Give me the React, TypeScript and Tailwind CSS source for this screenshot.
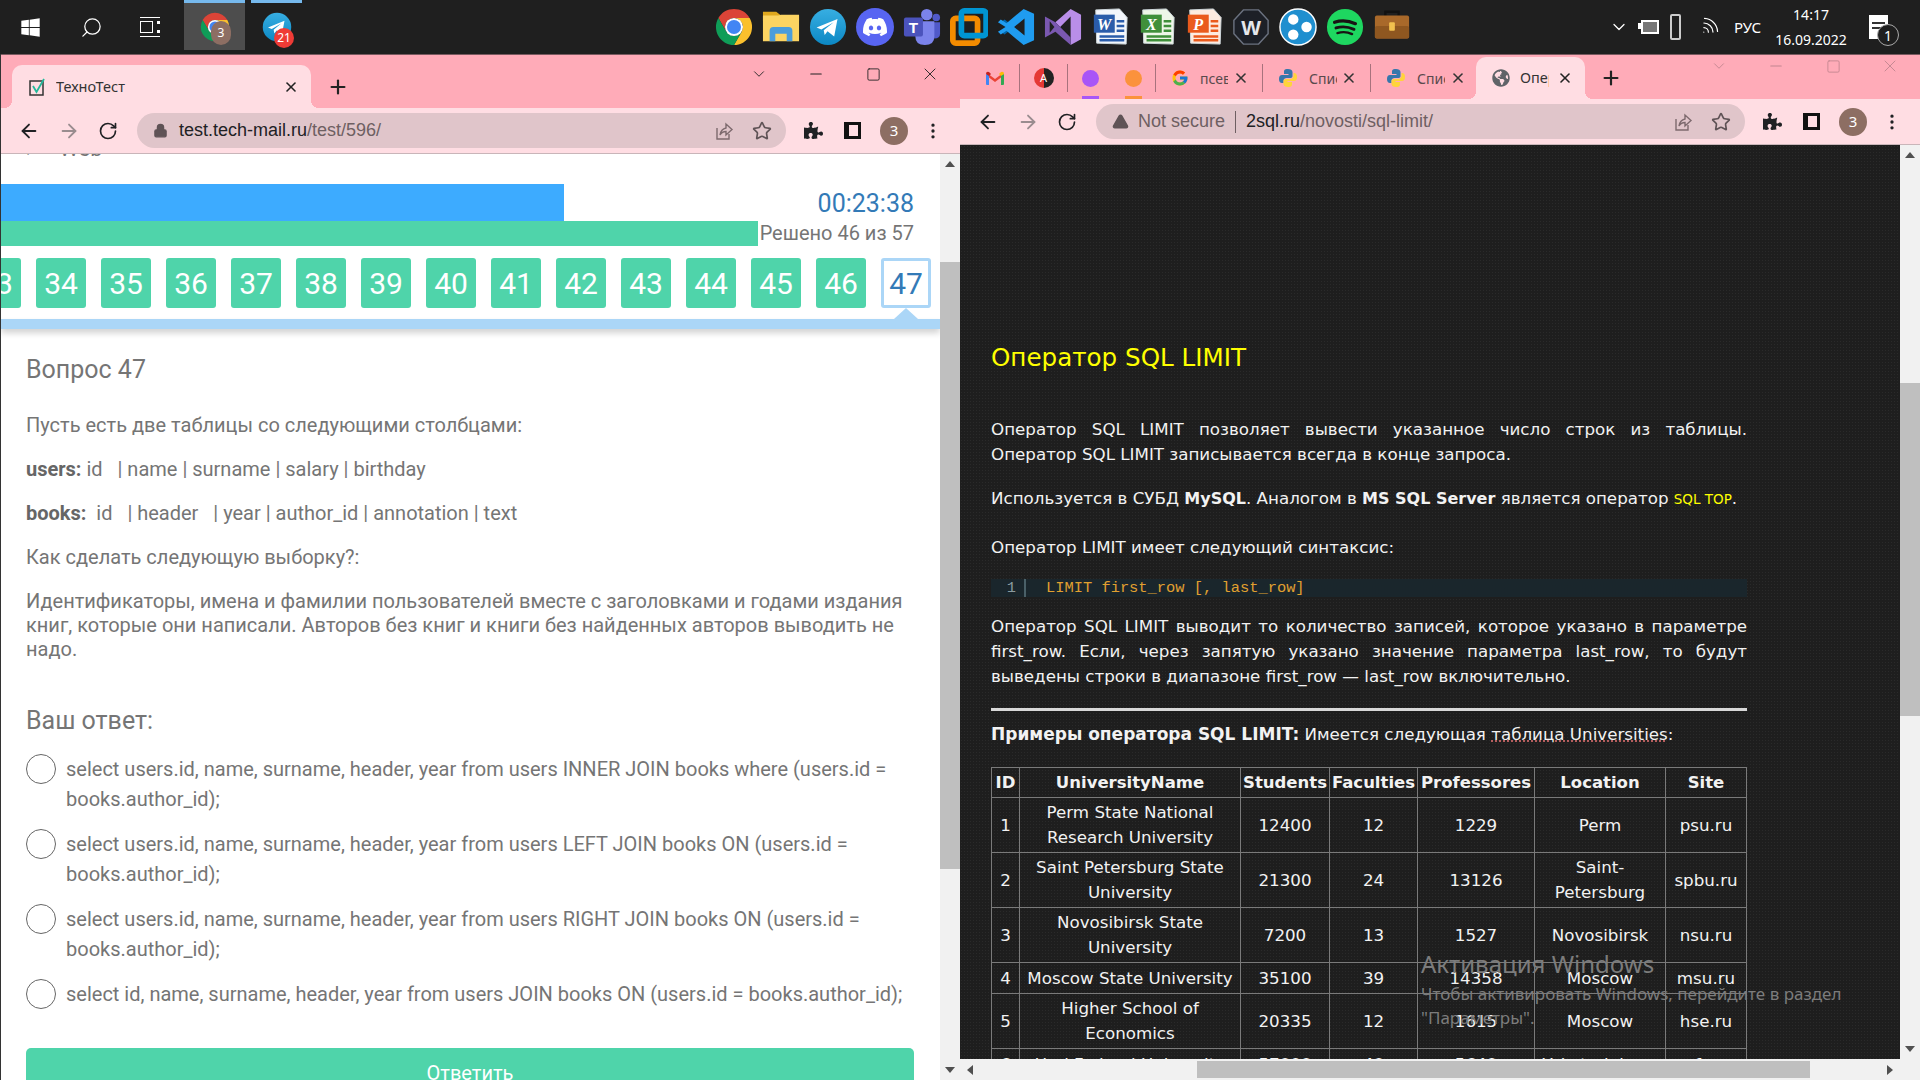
import { ArrowLeft, ArrowRight, ChevronDown, Lock, Minus, Plus, RotateCw, Search, Square, Star, TriangleAlert, Wifi, X, EllipsisVertical } from 'lucide-react'
import { ReactNode } from 'react'
import { FaPuzzlePiece, FaWindows, FaGlobeAmericas } from 'react-icons/fa'
import { FcGoogle } from 'react-icons/fc'
import { SiDiscord } from 'react-icons/si'

const ChromeIcon = ({ size = 38 }: { size?: number }) => (
  <svg width={size} height={size} viewBox="0 0 40 40">
    <path fill="#db4437" d="M3.55 10.5A19 19 0 0 1 36.45 10.5H20A9.5 9.5 0 0 0 11.8 24.75Z" />
    <path fill="#fbc02d" d="M36.45 10.5A19 19 0 0 1 20 39L28.2 24.75A9.5 9.5 0 0 0 20 10.5Z" />
    <path fill="#0f9d58" d="M20 39A19 19 0 0 1 3.55 10.5L11.8 24.75A9.5 9.5 0 0 0 28.2 24.75Z" />
    <circle cx="20" cy="20" r="9.5" fill="#fff" />
    <circle cx="20" cy="20" r="7.4" fill="#4285f4" />
  </svg>
)

const TelegramIcon = ({ size = 38 }: { size?: number }) => (
  <svg width={size} height={size} viewBox="0 0 40 40">
    <defs>
      <linearGradient id="tg" x1="0" y1="0" x2="0" y2="1">
        <stop offset="0" stopColor="#37aee2" />
        <stop offset="1" stopColor="#0c88c4" />
      </linearGradient>
    </defs>
    <circle cx="20" cy="20" r="19" fill="url(#tg)" />
    <path fill="#fff" d="M8 20.5 30 11.5 26.5 30 19.5 24.5 16.5 28.5 15.5 23.5 26 15 13 22.5Z" />
  </svg>
)

const FolderIcon = () => (
  <svg width="38" height="38" viewBox="0 0 40 40">
    <path fill="#e0a81e" d="M1 4h14l5 4h19v6H1Z" />
    <path fill="#fcd462" d="M1 8h16l3-1h19v28H1Z" />
    <path fill="#4b9ddb" d="M8 35V24q0-4 4-4h16q4 0 4 4v11h-6v-8H14v8Z" />
  </svg>
)

const DiscordIcon = () => (
  <div className="w-[38px] h-[38px] rounded-full bg-[#5865f2] flex items-center justify-center">
    <SiDiscord className="text-white" size={24} />
  </div>
)

const TeamsIcon = () => (
  <svg width="38" height="38" viewBox="0 0 40 40">
    <circle cx="25" cy="7" r="6" fill="#7b83eb" />
    <circle cx="35" cy="10" r="4" fill="#5059c9" />
    <path fill="#5059c9" d="M30 15h9v12q0 5-6 5h-3Z" />
    <path fill="#7b83eb" d="M13 14h20v16q0 9-10 9T13 30Z" />
    <rect x="1" y="10" width="20" height="20" rx="2" fill="#4b53bc" />
    <text x="11" y="26" textAnchor="middle" fontSize="16" fontWeight="700" fill="#fff" fontFamily="Liberation Sans, sans-serif">T</text>
  </svg>
)

const VmwareIcon = () => (
  <svg width="38" height="38" viewBox="0 0 40 40">
    <rect x="3" y="11" width="26" height="26" rx="3" fill="none" stroke="#f38b00" strokeWidth="6" />
    <rect x="12" y="3" width="26" height="26" rx="3" fill="none" stroke="#0095d3" strokeWidth="6" />
  </svg>
)

const VsCodeIcon = () => (
  <svg width="38" height="38" viewBox="0 0 40 40">
    <path fill="#0065a9" d="M4 15 8 12 18 20 8 28 4 25 10 20Z" />
    <path fill="#1f9cf0" d="M28 1 39 6V34L28 39 10 24 4 28 1 25 9 20 1 15 4 12 10 16ZM29 11 18 20 29 29Z" />
  </svg>
)

const VisualStudioIcon = () => (
  <svg width="38" height="38" viewBox="0 0 40 40">
    <path fill="#b98ee8" d="M28 1 39 7V33L28 39V9L17 20 12 15Z" />
    <path fill="#7a58b0" d="M28 39 12 25 1 31V9L12 15 28 31ZM6 14V26L11 20Z" />
  </svg>
)

const OfficeIcon = ({ letter, color, light }: { letter: string; color: string; light: string }) => (
  <svg width="38" height="38" viewBox="0 0 40 40">
    <path fill={light} d="M5 2 30 1 38 10 37 38 6 37Z" stroke="#cfd8dc" />
    <rect x="3" y="7" width="22" height="19" fill={color} />
    <text x="14" y="23" textAnchor="middle" fontSize="17" fontWeight="700" fontStyle="italic" fill="#fff" fontFamily="Liberation Serif, serif">{letter}</text>
    <path stroke={color} strokeWidth="2.5" d="M27 14h8M27 19h8M27 24h8M9 30h26M9 34h26" />
  </svg>
)

const WindscribeIcon = () => (
  <svg width="38" height="38" viewBox="0 0 40 40">
    <path fill="#1d2027" stroke="#6b7280" strokeWidth="1.5" d="M12 2H28L38 13V27L28 38H12L2 27V13Z" />
    <text x="20" y="28" textAnchor="middle" fontSize="22" fontWeight="700" fill="#e5e7eb" fontFamily="Liberation Sans, sans-serif">W</text>
  </svg>
)

const DotsIcon = () => (
  <svg width="38" height="38" viewBox="0 0 40 40">
    <circle cx="20" cy="20" r="19" fill="#1f8fcf" stroke="#fff" strokeWidth="1.5" />
    <circle cx="15" cy="12" r="5.5" fill="#fff" />
    <circle cx="29" cy="20" r="5.5" fill="#fff" />
    <circle cx="15" cy="28" r="5.5" fill="#fff" />
  </svg>
)

const SpotifyIcon = () => (
  <svg width="38" height="38" viewBox="0 0 40 40">
    <circle cx="20" cy="20" r="19" fill="#1ed760" />
    <g fill="none" stroke="#191414" strokeLinecap="round">
      <path strokeWidth="3.4" d="M9 15q11-3.5 22 1.5" />
      <path strokeWidth="3" d="M10.5 21q9.5-3 19 1.5" />
      <path strokeWidth="2.4" d="M12 26.5q8-2.5 15.5 1" />
    </g>
  </svg>
)

const BriefcaseIcon = () => (
  <svg width="38" height="38" viewBox="0 0 40 40">
    <path fill="none" stroke="#111" strokeWidth="2.5" d="M13 9V4h14v5" />
    <rect x="2" y="8" width="36" height="24" rx="2" fill="#a9692a" />
    <rect x="2" y="19" width="36" height="13" rx="2" fill="#8f5720" />
    <rect x="17" y="15" width="6" height="9" rx="1" fill="#f2c14e" />
  </svg>
)

const TabCheckIcon = () => (
  <svg width="18" height="18" viewBox="0 0 18 18" className="shrink-0">
    <rect x="2" y="3" width="13" height="14" fill="none" stroke="#333" strokeWidth="1.5" />
    <path d="M5 8 8.5 14 16 1" fill="none" stroke="#22b89a" strokeWidth="1.8" />
  </svg>
)

const GmailIcon = () => (
  <svg width="20" height="20" viewBox="0 0 20 20">
    <path fill="#ea4335" d="M2 5 10 11 18 5V8L10 14 2 8Z" />
    <path fill="#4285f4" d="M1 6 4 7V17H2Q1 17 1 16Z" />
    <path fill="#34a853" d="M19 6 16 7V17H18Q19 17 19 16Z" />
    <path fill="#c5221f" d="M1 6Q1 3 4 4L6 6 4 8Z" />
    <path fill="#fbbc04" d="M19 6Q19 3 16 4L14 6 16 8Z" />
  </svg>
)

const PythonIcon = () => (
  <svg width="20" height="20" viewBox="0 0 20 20" className="shrink-0">
    <path fill="#3776ab" d="M10 1C6 1 6 2.5 6 4V6H10.5V7H4C2 7 1 8.5 1 11S2 15 4 15H5.5V12.5C5.5 11 7 10 8.5 10H12.5C14 10 14.5 9 14.5 8V4C14.5 2 12.5 1 10 1Z" />
    <path fill="#ffd43b" d="M10 19C14 19 14 17.5 14 16V14H9.5V13H16C18 13 19 11.5 19 9S18 5 16 5H15.5V8C15.5 9.5 14 11 12.5 11H8C6.5 11 5.5 12 5.5 13V16C5.5 18 7.5 19 10 19Z" />
  </svg>
)

const ShareIcon = () => (
  <svg width="20" height="20" viewBox="0 0 20 20" fill="none" stroke="#7d6a6e" strokeWidth="1.4">
    <path d="M3 7V18H15V13" />
    <path d="M6 14Q7 8 12 7V3L18 8.5 12 14V10.5Q8 10.5 6 14Z" />
  </svg>
)

const AvatarBadge = () => (
  <div className="ml-[19px] w-[28px] h-[28px] rounded-full bg-[#8d6e63] text-white text-[15px] flex items-center justify-center">3</div>
)

type ToolbarProps = {
  site: ReactNode
  height: string
}

const Toolbar = ({ site, height }: ToolbarProps) => (
  <div className={`${height} bg-[#ffdde3] flex items-center shrink-0 border-b border-[#c9b5b9] text-[#202124]`}>
    <div className="w-[136px] flex items-center pl-[17px] gap-[18px]">
      <ArrowLeft size={22} />
      <ArrowRight size={22} className="text-[#9a8c8f]" />
      <RotateCw size={20} />
    </div>
    <div className="w-[649px] h-[35px] rounded-full bg-[#e0c5ca] flex items-center pl-[16px] pr-[14px] text-[18px]">
      {site}
      <div className="ml-auto flex items-center gap-[18px]">
        <ShareIcon />
        <Star size={20} className="text-[#5f5356]" />
      </div>
    </div>
    <div className="flex items-center pl-[18px]">
      <FaPuzzlePiece size={19} />
      <div className="ml-[21px] w-[17px] h-[17px] border-[3px] border-l-[5px] border-[#111] bg-[#ffdde3]" />
      <AvatarBadge />
      <EllipsisVertical size={20} className="ml-[15px]" />
    </div>
  </div>
)

const WindowControls = ({ faded }: { faded?: boolean }) => (
  <div className={`ml-auto flex items-center ${faded ? 'h-[22px] text-[#c2868f]' : 'h-[38px] text-[#222]'}`}>
    <ChevronDown size={18} strokeWidth={1.2} />
    <Minus size={18} strokeWidth={1.4} className="ml-[39px]" />
    <Square size={15} strokeWidth={1.4} className="ml-[41px]" />
    <X size={20} strokeWidth={1.1} className="ml-[39px] mr-[20px]" />
  </div>
)

const ActiveTab = ({ icon, title, w }: { icon: ReactNode; title: string; w: string }) => (
  <div className={`relative ${w} h-full rounded-t-[10px] bg-[#ffdde3] flex items-center pl-[16px] pr-[12px] text-[14.5px] text-[#333] shrink-0`}>
    <span className="absolute -left-[8px] bottom-0 w-[8px] h-[8px] bg-[radial-gradient(circle_at_0_0,#ffabb8_8px,#ffdde3_8px)]" />
    <span className="absolute -right-[8px] bottom-0 w-[8px] h-[8px] bg-[radial-gradient(circle_at_100%_0,#ffabb8_8px,#ffdde3_8px)]" />
    {icon}
    <span className="ml-[10px] overflow-hidden whitespace-nowrap flex-1">{title}</span>
    <X size={16} strokeWidth={2.4} className="ml-[8px] shrink-0 text-[#222]" />
  </div>
)

const SmallTab = ({ icon, title }: { icon: ReactNode; title: string }) => (
  <div className="w-[108px] h-[28px] flex items-center pl-[15px] pr-[13px] border-r border-[#a8727d] text-[14px] text-[#5a4a4d] shrink-0">
    {icon}
    <span className="ml-[11px] overflow-hidden whitespace-nowrap w-[28px]">{title}</span>
    <X size={16} strokeWidth={2.4} className="ml-auto text-[#333] shrink-0" />
  </div>
)

const Scrollbar = ({ before, thumb }: { before: string; thumb: string }) => (
  <div className="w-[20px] shrink-0 bg-[#f1f1f1] flex flex-col items-center relative">
    <div className={`${before} w-full flex justify-center pt-[7px]`}>
      <div className="w-0 h-0 border-x-[5px] border-x-transparent border-b-[6px] border-b-[#505050]" />
    </div>
    <div className={`${thumb} w-full bg-[#bfbfbf]`} />
    <div className="flex-1 w-full flex justify-center items-end pb-[7px]">
      <div className="w-0 h-0 border-x-[5px] border-x-transparent border-t-[6px] border-t-[#505050]" />
    </div>
  </div>
)

const Taskbar = () => (
  <div className="h-[54px] bg-[#1f1f1f] flex items-center shrink-0 text-white">
    <div className="w-[20px]" />
    <FaWindows size={21} />
    <Search size={23} strokeWidth={1.3} className="ml-[39px] -scale-x-100" />
    <div className="ml-[37px] w-[20px] h-[20px] border-y border-white relative">
      <div className="absolute right-0 top-[3px] w-[3px] h-[12px] border-y-[3px] border-white" />
      <div className="absolute left-0 top-[3px] w-[13px] h-[12px] border border-white" />
    </div>
    <div className="ml-[24px] w-[61px] h-[50px] self-start bg-[#4d4d4d] border-t-[3px] border-[#76b9ed] flex items-center justify-center relative">
      <ChromeIcon size={30} />
      <span className="absolute left-[27px] top-[18px] w-[20px] h-[24px] rounded-full bg-[#8d6e63] text-[12px] flex items-center justify-center">3</span>
    </div>
    <div className="ml-[6px] w-[51px] h-[50px] self-start border-t-[3px] border-[#76b9ed] flex items-center justify-center relative">
      <TelegramIcon size={30} />
      <span className="absolute left-[23px] top-[25px] w-[20px] h-[20px] rounded-full bg-[#ef3b36] text-[12px] flex items-center justify-center">21</span>
    </div>
    <div className="ml-[413px] flex items-center gap-[9px]">
      <ChromeIcon />
      <FolderIcon />
      <TelegramIcon />
      <DiscordIcon />
      <TeamsIcon />
      <VmwareIcon />
      <VsCodeIcon />
      <VisualStudioIcon />
      <OfficeIcon letter="W" color="#2a5caa" light="#f3f6fb" />
      <OfficeIcon letter="X" color="#3f8f3a" light="#eef6e8" />
      <OfficeIcon letter="P" color="#ea5a1c" light="#fdebe0" />
      <WindscribeIcon />
      <DotsIcon />
      <SpotifyIcon />
      <BriefcaseIcon />
    </div>
    <ChevronDown size={20} strokeWidth={1.5} className="ml-[198px]" />
    <div className="ml-[12px] w-[18px] h-[14px] border-2 border-white bg-[#777] relative">
      <div className="absolute -left-[5px] top-[1px] w-[5px] h-[6px] bg-white" />
    </div>
    <div className="ml-[11px] w-[11px] h-[26px] border-2 border-[#ccc] rounded-[2px]" />
    <Wifi size={22} strokeWidth={1.3} className="ml-[17px] rotate-45" />
    <span className="ml-[14px] text-[15px] font-['Noto_Sans',sans-serif]">РУС</span>
    <div className="ml-[4px] w-[92px] flex flex-col items-center text-[14px] leading-[25px] font-['Noto_Sans',sans-serif]">
      <span>14:17</span>
      <span>16.09.2022</span>
    </div>
    <div className="ml-[12px] w-[19px] h-[24px] bg-white relative">
      <div className="absolute left-[3px] top-[7px] w-[13px] h-[2px] bg-[#333]" />
      <div className="absolute left-[3px] top-[12px] w-[13px] h-[2px] bg-[#333]" />
      <span className="absolute left-[8px] top-[9px] w-[22px] h-[22px] rounded-full border border-[#aaa] bg-[#1f1f1f] text-[14px] flex items-center justify-center">1</span>
    </div>
  </div>
)

const numbers = [33, 34, 35, 36, 37, 38, 39, 40, 41, 42, 43, 44, 45, 46]

const answers = [
  'select users.id, name, surname, header, year from users INNER JOIN books where (users.id = books.author_id);',
  'select users.id, name, surname, header, year from users LEFT JOIN books ON (users.id = books.author_id);',
  'select users.id, name, surname, header, year from users RIGHT JOIN books ON (users.id = books.author_id);',
  'select id, name, surname, header, year from users JOIN books ON (users.id = books.author_id);',
]

const TestWindow = () => (
  <div className="w-[960px] h-full flex flex-col overflow-hidden border-l border-[#333]">
    <div className="h-[54px] bg-[#ffabb8] flex items-end pl-[11px] shrink-0 border-t border-[#7a5a60]">
      <div className="h-[43px]">
        <ActiveTab icon={<TabCheckIcon />} title="ТехноТест" w="w-[299px]" />
      </div>
      <Plus size={22} strokeWidth={2.4} className="ml-[16px] mb-[10px] text-[#222]" />
      <div className="self-start ml-auto">
        <WindowControls />
      </div>
    </div>
    <Toolbar
      height="h-[46px]"
      site={
        <>
          <Lock size={15} className="text-[#5f5356] mr-[11px]" fill="#5f5356" />
          <span className="font-['Liberation_Sans',sans-serif]">
            test.tech-mail.ru<span className="text-[#6e5f62]">/test/596/</span>
          </span>
        </>
      }
    />
    <div className="flex-1 flex min-h-0 bg-white">
      <div className="w-[939px] overflow-hidden font-['Roboto',sans-serif] text-[#757575]">
        <div className="h-[30px] overflow-hidden">
          <div className="-mt-[22px] pl-[20px] text-[22px] whitespace-pre">{'←   Web'}</div>
        </div>
        <div className="flex items-center justify-between pr-[26px] h-[37px]">
          <div className="w-[563px] h-full bg-[#3dabff]" />
          <span className="text-[25px] mt-[2px] text-[#337ab7]">00:23:38</span>
        </div>
        <div className="flex items-center justify-between pr-[26px] h-[25px]">
          <div className="w-[757px] h-full bg-[#4fd4aa]" />
          <span className="text-[20px] leading-[25px]">Решено 46 из 57</span>
        </div>
        <div className="flex gap-[15px] mt-[12px] -ml-[30px] text-[30px]">
          {numbers.map((n) => (
            <div key={n} className="w-[50px] h-[50px] rounded-[3px] bg-[#4fd4aa] text-white flex items-center justify-center shrink-0">
              {n}
            </div>
          ))}
          <div className="w-[50px] h-[50px] rounded-[3px] bg-white border-[3px] border-[#abd6f7] text-[#337ab7] flex items-center justify-center shrink-0">
            47
          </div>
        </div>
        <div className="relative mt-[11px] h-[10px] bg-[#abd6f7] shadow-[0_4px_6px_rgba(0,0,0,0.18)]">
          <div className="absolute left-[893px] -top-[11px] w-0 h-0 border-x-[12px] border-x-transparent border-b-[11px] border-b-[#abd6f7]" />
        </div>
        <div className="pl-[25px] pr-[26px] text-[20px] leading-[24px]">
          <div className="mt-[25px] text-[25px] leading-[32px]">Вопрос 47</div>
          <p className="mt-[27px]">Пусть есть две таблицы со следующими столбцами:</p>
          <p className="mt-[20px] whitespace-pre">
            <b className="text-[#666] font-bold">users:</b> id{'   '}| name | surname | salary | birthday
          </p>
          <p className="mt-[20px] whitespace-pre">
            <b className="text-[#666] font-bold">books:</b>{'  '}id{'   '}| header{'   '}| year | author_id | annotation | text
          </p>
          <p className="mt-[20px]">Как сделать следующую выборку?:</p>
          <p className="mt-[20px]">
            Идентификаторы, имена и фамилии пользователей вместе с заголовками и годами издания книг, которые они написали. Авторов без книг и книги без
            найденных авторов выводить не надо.
          </p>
          <div className="mt-[44px] text-[25px] leading-[32px]">Ваш ответ:</div>
          <div className="mt-[17px] flex flex-col gap-[15px] leading-[29.5px]">
            {answers.map((a) => (
              <div key={a} className="flex gap-[10px]">
                <div className="w-[30px] h-[30px] rounded-full border border-[#666] shrink-0" />
                <span className="pt-[1px]">{a}</span>
              </div>
            ))}
          </div>
          <div className="mt-[38px] h-[50px] rounded-t-[5px] bg-[#4fd4aa] text-white flex items-center justify-center">Ответить</div>
        </div>
      </div>
      <Scrollbar before="h-[108px]" thumb="h-[607px]" />
    </div>
  </div>
)

const rows = [
  ['1', 'Perm State National Research University', '12400', '12', '1229', 'Perm', 'psu.ru', 'h-[55px]'],
  ['2', 'Saint Petersburg State University', '21300', '24', '13126', 'Saint-Petersburg', 'spbu.ru', 'h-[55px]'],
  ['3', 'Novosibirsk State University', '7200', '13', '1527', 'Novosibirsk', 'nsu.ru', 'h-[55px]'],
  ['4', 'Moscow State University', '35100', '39', '14358', 'Moscow', 'msu.ru', 'h-[31px]'],
  ['5', 'Higher School of Economics', '20335', '12', '1615', 'Moscow', 'hse.ru', 'h-[55px]'],
  ['6', 'Ural Federal University', '57000', '40', '5640', 'Yekaterinburg', 'urfu.ru', 'h-[32px]'],
]

const headers = ['ID', 'UniversityName', 'Students', 'Faculties', 'Professores', 'Location', 'Site']

const ArticleWindow = () => (
  <div className="w-[960px] h-full flex flex-col overflow-hidden">
    <div className="h-[45px] bg-[#ffabb8] flex items-end pl-[10px] shrink-0 border-t border-[#7a5a60]">
      <div className="flex items-center self-end h-[42px]">
        <div className="w-[50px] h-[28px] border-r border-[#a8727d] flex items-center justify-center">
          <GmailIcon />
        </div>
        <div className="w-[48px] h-[28px] border-r border-[#a8727d] flex items-center justify-center">
          <span className="w-[20px] h-[20px] rounded-full bg-[linear-gradient(90deg,#e53935_50%,#222_50%)] text-white text-[11px] flex items-center justify-center">A</span>
        </div>
        <div className="w-[44px] h-full flex flex-col items-center justify-end">
          <span className="w-[17px] h-[17px] rounded-full bg-[#a855f7] mb-[9px]" />
          <span className="w-[17px] h-[3px] bg-[#a855f7]" />
        </div>
        <div className="w-[43px] h-full flex flex-col items-center justify-end border-r border-transparent">
          <span className="w-[17px] h-[17px] rounded-full bg-[#fb923c] mb-[9px]" />
          <span className="w-[17px] h-[3px] bg-[#fb923c]" />
        </div>
        <div className="w-[108px] h-[28px] flex items-center pl-[15px] pr-[13px] border-x border-[#a8727d] text-[14px] text-[#5a4a4d] shrink-0">
          <FcGoogle size={18} className="shrink-0" />
          <span className="ml-[11px] overflow-hidden whitespace-nowrap w-[28px]">псевдо</span>
          <X size={16} strokeWidth={2.4} className="ml-auto text-[#333] shrink-0" />
        </div>
        <SmallTab icon={<PythonIcon />} title="Список" />
        <div className="w-[105px] h-[28px] flex items-center pl-[15px] pr-[10px] text-[14px] text-[#5a4a4d] shrink-0">
          <PythonIcon />
          <span className="ml-[11px] overflow-hidden whitespace-nowrap w-[28px]">Список</span>
          <X size={16} strokeWidth={2.4} className="ml-auto text-[#333] shrink-0" />
        </div>
        <ActiveTab icon={<FaGlobeAmericas size={18} className="shrink-0 text-[#5f6368]" />} title="Оператор" w="w-[109px]" />
      </div>
      <Plus size={22} strokeWidth={2.4} className="ml-[15px] mb-[10px] text-[#222]" />
      <div className="self-start ml-auto">
        <WindowControls faded />
      </div>
    </div>
    <Toolbar
      height="h-[46px]"
      site={
        <>
          <TriangleAlert size={17} fill="#5f5356" className="text-[#5f5356] mr-[9px] shrink-0" />
          <span className="text-[#6e5f62] font-['Liberation_Sans',sans-serif]">Not secure</span>
          <span className="w-px h-[22px] bg-[#6e5f62] mx-[10px]" />
          <span className="font-['Liberation_Sans',sans-serif]">
            2sql.ru<span className="text-[#6e5f62]">/novosti/sql-limit/</span>
          </span>
        </>
      }
    />
    <div className="flex-1 min-h-0 flex flex-col">
      <div className="flex-1 min-h-0 flex">
        <div className="w-[940px] overflow-hidden bg-[#1e1e1e] bg-[radial-gradient(#2a2a2a_1px,transparent_1px)] bg-[length:3px_3px] pl-[31px] pr-[153px] text-[#f2f2f2] text-[16.7px] leading-[25px] font-['DejaVu_Sans',sans-serif]">
          <h1 className="mt-[197px] text-[#ffff00] text-[24.6px] leading-[32px]">Оператор SQL LIMIT</h1>
          <p className="mt-[43px] text-justify">Оператор SQL LIMIT позволяет вывести указанное число строк из таблицы. Оператор SQL LIMIT записывается всегда в конце запроса.</p>
          <p className="mt-[19px]">
            Используется в СУБД <b className="text-[16px]">MySQL</b>. Аналогом в <b className="text-[16px]">MS SQL Server</b> является оператор{' '}
            <span className="text-[#ffff00] text-[13.5px] whitespace-nowrap">SQL TOP</span>.
          </p>
          <p className="mt-[23px]">Оператор LIMIT имеет следующий синтаксис:</p>
          <div className="mt-[19px] h-[18px] bg-[#1a262c] flex items-center font-['Liberation_Mono',monospace] text-[15.4px] text-[#e0a030]">
            <span className="w-[35px] h-full text-right pr-[8px] text-[#8a9a9f] border-r-[2px] border-[#4a6068] leading-[18px]">1</span>
            <span className="ml-[20px]">LIMIT first_row [, last_row]</span>
          </div>
          <p className="mt-[17px] text-justify">
            Оператор SQL LIMIT выводит то количество записей, которое указано в параметре first_row. Если, через запятую указано значение параметра last_row, то будут выведены строки в диапазоне first_row — last_row включительно.
          </p>
          <div className="mt-[19px] h-[3px] bg-[#d8d8d8]" />
          <p className="mt-[11px]">
            <b className="text-[17px]">Примеры оператора SQL LIMIT:</b> Имеется следующая <span className="underline decoration-dotted decoration-[#e57373]">таблица Universities</span>:
          </p>
          <table className="mt-[20px] w-[755px] table-fixed border-collapse text-center">
            <colgroup>
              <col className="w-[28px]" />
              <col className="w-[221px]" />
              <col className="w-[89px]" />
              <col className="w-[88px]" />
              <col className="w-[117px]" />
              <col className="w-[131px]" />
              <col className="w-[81px]" />
            </colgroup>
            <thead>
              <tr className="h-[30px]">
                {headers.map((h) => (
                  <th key={h} className="border border-[#7a7a7a] p-0 font-bold whitespace-nowrap text-[16.5px]">
                    {h}
                  </th>
                ))}
              </tr>
            </thead>
            <tbody>
              {rows.map((r) => (
                <tr key={r[0]} className={r[7]}>
                  {r.slice(0, 7).map((c, i) => (
                    <td key={i} className="border border-[#7a7a7a] px-[4px] py-0 leading-[25px]">
                      {c}
                    </td>
                  ))}
                </tr>
              ))}
            </tbody>
          </table>
        </div>
        <Scrollbar before="h-[238px]" thumb="h-[333px]" />
      </div>
      <div className="h-[21px] bg-[#f1f1f1] flex items-center shrink-0">
        <div className="w-[237px] h-full flex items-center pl-[7px]">
          <div className="w-0 h-0 border-y-[5px] border-y-transparent border-r-[6px] border-r-[#505050]" />
        </div>
        <div className="w-[613px] h-[17px] bg-[#bfbfbf]" />
        <div className="w-[90px] h-full flex items-center justify-end pr-[7px]">
          <div className="w-0 h-0 border-y-[5px] border-y-transparent border-l-[6px] border-l-[#505050]" />
        </div>
      </div>
    </div>
  </div>
)

export default function App() {
  return (
    <div className="relative w-[1920px] h-[1080px] overflow-hidden flex flex-col bg-[#1f1f1f]">
      <Taskbar />
      <div className="flex-1 min-h-0 flex">
        <TestWindow />
        <ArticleWindow />
      </div>
      <div className="absolute left-[1421px] top-[949px] text-[#7c7c7c] font-['Noto_Sans',sans-serif] pointer-events-none">
        <div className="text-[24px] leading-[30px]">Активация Windows</div>
        <div className="text-[17px] leading-[24px] mt-[3px]">
          Чтобы активировать Windows, перейдите в раздел
          <br />
          "Параметры".
        </div>
      </div>
    </div>
  )
}
